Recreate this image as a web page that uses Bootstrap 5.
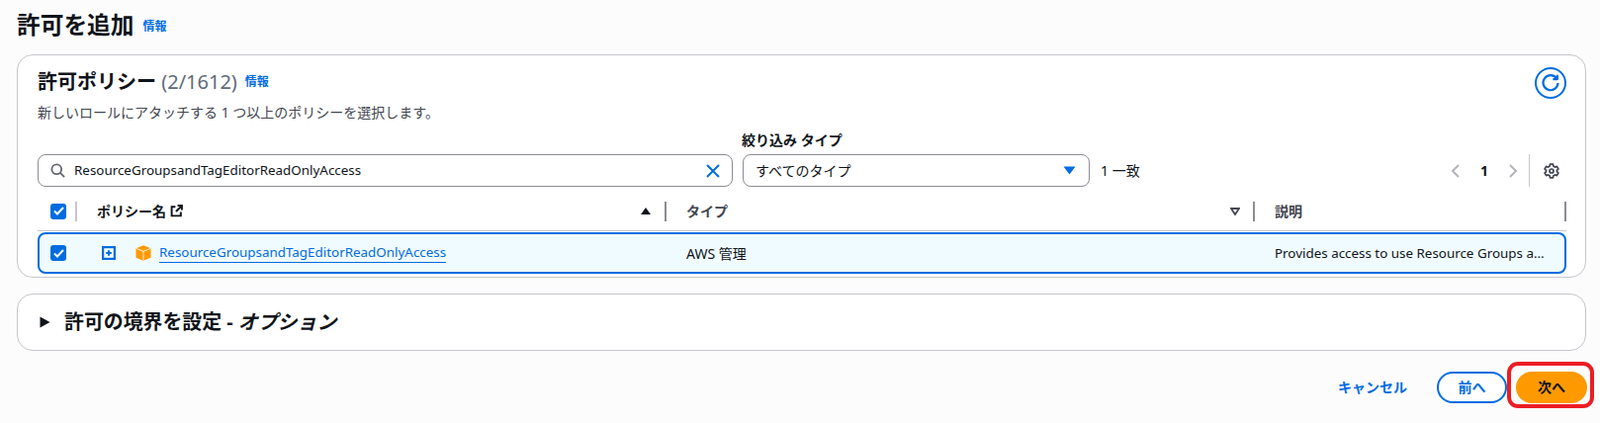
<!DOCTYPE html>
<html lang="ja">
<head>
<meta charset="utf-8">
<title>許可を追加</title>
<link href="https://cdn.jsdelivr.net/npm/bootstrap@5.3.0/dist/css/bootstrap.min.css" rel="stylesheet">
<style>
body{background:#fcfcfd;color:#0f141a;font-family:"Noto Sans","Noto Sans CJK JP",sans-serif;font-size:14px;height:428px;overflow:hidden;}
.page-wrap{padding:0 14px 0 17px;}
.lat{font-size:13.4px;}
.srch-txt{margin-left:1px;}
.page-title{height:55px;align-items:center;padding-bottom:5px;gap:9px;}
.page-title h1{font-size:23.7px;font-weight:700;margin:0;line-height:30px;}
.info-lnk{font-size:12px;font-weight:700;color:#006ce0;text-decoration:none;}
.panel{background:#fff;border:1px solid #c6c6cd;border-radius:16px;}
.perm-panel{height:226px;padding:0 19px 0 20px;}
.panel-head{height:45px;padding-top:12px;}
.panel-head h2{font-size:20px;font-weight:700;margin:0;line-height:30px;}
.count{font-weight:400;color:#5f6b7a;}
.refresh{width:32px;height:32px;border:2px solid #006ce0;border-radius:50%;background:#fff;padding:0;margin-right:0;}
.desc{font-size:14px;color:#424650;line-height:18px;margin-top:4px;}
.filter-lbl{font-size:14px;font-weight:700;line-height:18px;height:18px;margin-left:712px;margin-top:10px;margin-bottom:5px;}
.field{height:33px;border:1px solid #8c8c94;border-radius:8px;background:#fff;padding:0 12px;}
.search-field{width:703px;}
.select-field{width:351px;margin-left:10px;padding-left:12px;padding-right:13px;}
.match{margin-left:11px;padding-top:6px;}
.pager-num{font-weight:700;margin:0 20px;}
.pager{padding-right:7px;}
.vbar{width:1px;height:33px;background:#c6c6cd;margin:0 14px 0 11px;}
.t-head{height:45px;border-bottom:1px solid #c6c6cd;align-items:center;font-weight:700;padding-top:5px;}
.t-row{height:42px;margin-top:1px;border:2px solid #006ce0;border-radius:8px;background:#f0fbff;align-items:center;}
.c-check{width:38px;padding-left:13px;flex:none;}
.c-name{width:594px;flex:none;padding:0 14px 0 20px;}
.c-type{width:593px;flex:none;padding:0 13px 0 20px;color:#424650;}
.c-desc{flex:1;min-width:0;padding-left:20px;color:#424650;}
.t-sep{width:2px;height:20px;background:#8c8c94;flex:none;}
.t-sep-lt{background:#c6c6cd;}
.chk{width:16px;height:16px;border-radius:3px;background:#006ce0;display:flex;align-items:center;justify-content:center;}
.r-check{width:37px;padding-left:11px;flex:none;}
.r-name{width:597px;flex:none;padding-left:26px;}
.r-type{width:595px;flex:none;padding-left:20px;}
.r-desc{flex:1;min-width:0;padding-left:20px;white-space:nowrap;}
.pkg{margin:0 8px 0 20px;}
.pol-lnk{color:#006ce0;text-decoration:none;border-bottom:1px solid #006ce0;line-height:19px;display:inline-block;}
.bound-panel{height:58px;margin-top:16px;padding-left:22px;}
.bound-panel span{font-size:19.9px;font-weight:700;margin-left:6px;}
.foot{margin-top:20px;height:33px;position:relative;margin-right:-1px;}
.cancel-lnk{font-weight:700;color:#006ce0;text-decoration:none;margin-right:30px;}
.pill{height:32px;width:71px;border-radius:16px;font-weight:700;font-size:14px;padding:0;display:flex;align-items:center;justify-content:center;}
.pill-line{background:#fff;border:2px solid #006ce0;color:#006ce0;}
.pill-main{width:72px;background:#ff9900;border:0;color:#0f141a;margin-left:9px;}
.mark-box{position:absolute;right:-7px;top:-9px;width:88px;height:47px;border:4px solid #ed1c24;border-radius:11px;pointer-events:none;}
</style>
</head>
<body>
<div class="page-wrap">
  <div class="page-title d-flex">
    <h1>許可を追加</h1><a class="info-lnk mt-1" href="#">情報</a>
  </div>

  <div class="panel perm-panel">
    <div class="panel-head d-flex justify-content-between align-items-start">
      <div class="d-flex align-items-center gap-2">
        <h2>許可ポリシー <span class="count">(2/1612)</span></h2><a class="info-lnk" href="#">情報</a>
      </div>
      <button class="refresh d-flex align-items-center justify-content-center" aria-label="更新">
        <svg width="20" height="20" viewBox="0 0 20 20" fill="none" stroke="#006ce0" stroke-width="2.2"><path d="M16 5.2A7.500 7.500 0 1 0 17.500 10"/><path d="M16.800 1.800v4.400h-4.400" stroke-linejoin="round"/></svg>
      </button>
    </div>
    <div class="desc">新しいロールにアタッチする 1 つ以上のポリシーを選択します。</div>
    <div class="filter-lbl">絞り込み タイプ</div>
    <div class="d-flex">
      <div class="field search-field d-flex align-items-center">
        <svg width="15" height="15" viewBox="0 0 16 16" fill="none" stroke="#656871" stroke-width="2" class="me-2"><circle cx="6.700" cy="6.700" r="5.200"/><path d="M10.500 10.500l4.500 4.500"/></svg>
        <span class="flex-grow-1 lat srch-txt">ResourceGroupsandTagEditorReadOnlyAccess</span>
        <svg width="14" height="14" viewBox="0 0 14 14" fill="none" stroke="#006ce0" stroke-width="2"><path d="M1 1l12 12M13 1L1 13"/></svg>
      </div>
      <div class="field select-field d-flex align-items-center justify-content-between">
        <span>すべてのタイプ</span>
        <svg width="13" height="9" viewBox="0 0 13 9" fill="#006ce0"><path d="M0.500 0.500h12L6.500 8.500z"/></svg>
      </div>
      <div class="match">1 一致</div>
      <div class="pager ms-auto d-flex align-items-center">
        <svg width="10" height="16" viewBox="0 0 10 16" fill="none" stroke="#b4b4bb" stroke-width="2"><path d="M8 2L2 8l6 6"/></svg>
        <span class="pager-num">1</span>
        <svg width="10" height="16" viewBox="0 0 10 16" fill="none" stroke="#b4b4bb" stroke-width="2"><path d="M2 2l6 6-6 6"/></svg>
        <div class="vbar"></div>
        <svg width="16" height="16" viewBox="0 0 16 16" fill="none" stroke="#424650" stroke-width="1.700" stroke-linejoin="round"><path d="M6.500 1.200h3l.4 2 1.600.9 1.900-.7 1.500 2.600-1.500 1.300v1.400l1.500 1.300-1.500 2.600-1.900-.7-1.600.9-.4 2h-3l-.4-2-1.600-.9-1.900.7-1.500-2.600 1.500-1.300V7.300L1.100 6 2.600 3.400l1.900.7 1.600-.9z"/><circle cx="8" cy="8" r="2"/></svg>
      </div>
    </div>
    <div class="t-head d-flex">
      <div class="c-check"><span class="chk"><svg width="11" height="9" viewBox="0 0 11 9" fill="none" stroke="#fff" stroke-width="2"><path d="M1 4.500l3 3 6-6.500"/></svg></span></div>
      <div class="t-sep t-sep-lt"></div>
      <div class="c-name d-flex align-items-center justify-content-between">
        <span class="d-flex align-items-center gap-1">ポリシー名
          <svg width="13" height="13" viewBox="0 0 12 12" fill="none" stroke="#0f141a" stroke-width="1.800"><path d="M5 2H1.500v8.500H10V7M7 1h4v4M11 1L5.500 6.500"/></svg></span>
        <svg width="10" height="7" viewBox="0 0 10 7" fill="#0f141a"><path d="M5 0l5 7H0z"/></svg>
      </div>
      <div class="t-sep"></div>
      <div class="c-type d-flex align-items-center justify-content-between">
        <span>タイプ</span>
        <svg width="10" height="8" viewBox="0 0 10 8" fill="none" stroke="#424650" stroke-width="1.800"><path d="M1 1h8L5 7z"/></svg>
      </div>
      <div class="t-sep"></div>
      <div class="c-desc">説明</div>
      <div class="t-sep"></div>
    </div>
    <div class="t-row d-flex">
      <div class="r-check"><span class="chk"><svg width="11" height="9" viewBox="0 0 11 9" fill="none" stroke="#fff" stroke-width="2"><path d="M1 4.500l3 3 6-6.500"/></svg></span></div>
      <div class="r-name d-flex align-items-center">
        <svg width="14" height="14" viewBox="0 0 14 14" fill="none" stroke="#006ce0"><rect x="1.100" y="1.100" width="11.800" height="11.800" stroke-width="2.200"/><path d="M7 4.200v5.600M4.200 7h5.600" stroke-width="2"/></svg>
        <svg class="pkg" width="16" height="16" viewBox="0 0 16 16"><path d="M8 0.300L15.500 3.300V12.800L8 15.700 0.500 12.800V3.300z" fill="#ff9900"/><path d="M1 3.500L8 6.300 15 3.500M8 6.300V15.500" fill="none" stroke="#fff" stroke-width="0.900"/></svg>
        <a class="pol-lnk lat" href="#">ResourceGroupsandTagEditorReadOnlyAccess</a>
      </div>
      <div class="r-type">AWS 管理</div>
      <div class="r-desc lat">Provides access to use Resource Groups a…</div>
    </div>
  </div>

  <div class="panel bound-panel d-flex align-items-center gap-2">
    <svg width="11" height="12" viewBox="0 0 11 12" fill="#0f141a"><path d="M0.500 0.500L10.500 6 0.500 11.500z"/></svg>
    <span>許可の境界を設定 - <em>オプション</em></span>
  </div>

  <div class="foot d-flex justify-content-end align-items-center">
    <a class="cancel-lnk" href="#">キャンセル</a>
    <button class="pill pill-line">前へ</button>
    <button class="pill pill-main">次へ</button>
    <div class="mark-box"></div>
  </div>
</div>
<script src="https://cdn.jsdelivr.net/npm/bootstrap@5.3.0/dist/js/bootstrap.bundle.min.js"></script>
</body>
</html>
